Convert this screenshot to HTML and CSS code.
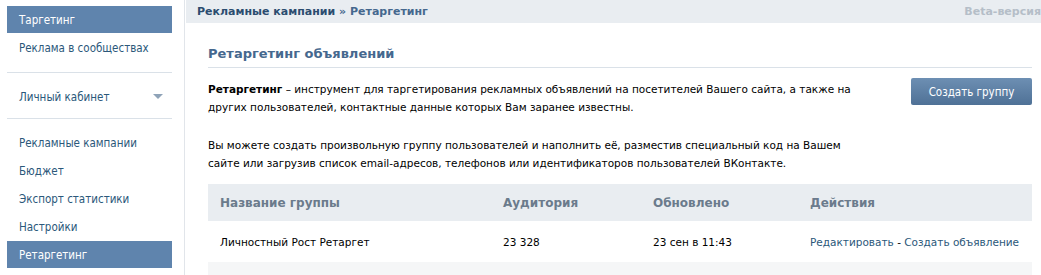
FILE: index.html
```html
<!DOCTYPE html>
<html lang="ru">
<head>
<meta charset="utf-8">
<link rel="stylesheet" href="styles.css">
</head>
<body>
<div class="page">
  <nav class="sidebar">
    <a class="item active">Таргетинг</a>
    <a class="item">Реклама в сообществах</a>
    <div class="divider"></div>
    <a class="item dropdown">Личный кабинет <span class="caret"></span></a>
    <div class="divider second"></div>
    <a class="item">Рекламные кампании</a>
    <a class="item">Бюджет</a>
    <a class="item">Экспорт статистики</a>
    <a class="item">Настройки</a>
    <a class="item active">Ретаргетинг</a>
  </nav>
  <main class="main">
    <div class="topbar">
      <div class="crumbs"><span class="crumb-strong">Рекламные кампании</span> » Ретаргетинг</div>
      <div class="beta">Beta-версия</div>
    </div>
    <div class="content">
      <h1 class="title">Ретаргетинг объявлений</h1>
      <div class="intro">
        <div class="intro-text">
          <p><b>Ретаргетинг</b> – инструмент для таргетирования рекламных объявлений на посетителей Вашего сайта, а также на других пользователей, контактные данные которых Вам заранее известны.</p>
          <p>Вы можете создать произвольную группу пользователей и наполнить её, разместив специальный код на Вашем сайте или загрузив список email-адресов, телефонов или идентификаторов пользователей ВКонтакте.</p>
        </div>
        <button class="btn">Создать группу</button>
      </div>
      <div class="table">
        <div class="row head">
          <div class="c1">Название группы</div>
          <div class="c2">Аудитория</div>
          <div class="c3">Обновлено</div>
          <div class="c4">Действия</div>
        </div>
        <div class="row">
          <div class="c1">Личностный Рост Ретаргет</div>
          <div class="c2">23 328</div>
          <div class="c3">23 сен в 11:43</div>
          <div class="c4"><a class="link">Редактировать</a> - <a class="link">Создать объявление</a></div>
        </div>
        <div class="row alt"></div>
      </div>
    </div>
  </main>
</div>
</body>
</html>
```
FILE: styles.css
```css
html, body {
  margin: 0;
  padding: 0;
  background: #fff;
}
body {
  font-family: "DejaVu Sans", sans-serif;
  font-size: 10.5px;
  color: #000;
  overflow: hidden;
}
.page {
  display: flex;
  align-items: stretch;
  height: 275px;
  overflow: hidden;
}
.sidebar {
  width: 165px;
  margin-left: 7px;
  padding-top: 6px;
  display: flex;
  flex-direction: column;
  flex-shrink: 0;
  font-family: "DejaVu Sans Condensed", "DejaVu Sans", sans-serif;
  font-size: 11.5px;
}
.item {
  display: flex;
  align-items: center;
  height: 27px;
  padding: 0 12px;
  margin-bottom: 1px;
  color: #2b587a;
}
.item.active {
  background: #5f84ad;
  color: #fff;
}
.dropdown {
  justify-content: space-between;
  padding-right: 8px;
}
.caret {
  width: 0;
  height: 0;
  border-left: 5px solid transparent;
  border-right: 5px solid transparent;
  border-top: 5px solid #8fa3b8;
  margin-right: 1px;
}
.divider {
  height: 1px;
  background: #dae1e8;
  margin: 10px 0;
}
.divider.second {
  margin-top: 7px;
}
.main {
  flex: 1;
  margin-left: 12px;
  border-left: 1px solid #e1e5ea;
  padding-left: 1px;
}
.topbar {
  height: 23px;
  background: #e9edf1;
  display: flex;
  align-items: center;
  justify-content: space-between;
  padding-left: 11px;
  font-weight: bold;
  font-size: 11px;
}
.crumbs { color: #45688e; }
.crumb-strong { color: #2b4c6f; }
.beta { color: #b5bec8; }
.content {
  padding: 0 9px 0 22px;
}
.title {
  margin: 0;
  padding: 23px 0 6px;
  font-size: 13px;
  font-weight: bold;
  color: #45688e;
  border-bottom: 1px solid #dae1e8;
}
.intro {
  display: flex;
  justify-content: space-between;
  align-items: flex-start;
  padding-top: 12px;
}
.intro-text {
  width: 660px;
}
.intro-text p {
  margin: 0 0 20px;
  line-height: 18px;
  color: #000;
}
.intro-text p:last-child { margin-bottom: 0; }
.btn {
  width: 121px;
  height: 27px;
  margin-top: -2px;
  border: 0;
  border-radius: 2px;
  background: linear-gradient(#6d8fb3, #4f7196);
  color: #fff;
  font-family: "DejaVu Sans Condensed", "DejaVu Sans", sans-serif;
  font-size: 11.5px;
  flex-shrink: 0;
}
.table {
  margin-top: 12px;
}
.row {
  display: flex;
  align-items: center;
  height: 41px;
  padding-left: 12px;
}
.row.head {
  height: 37px;
  background: #e9edf1;
  color: #6b7b8c;
  font-weight: bold;
  font-size: 12px;
}
.row.alt {
  height: 13px;
  background: #f5f6f7;
}
.c1 { width: 283px; }
.c2 { width: 150px; }
.c3 { width: 157px; }
.c4 { flex: 1; }
.link { color: #2b587a; }
```
